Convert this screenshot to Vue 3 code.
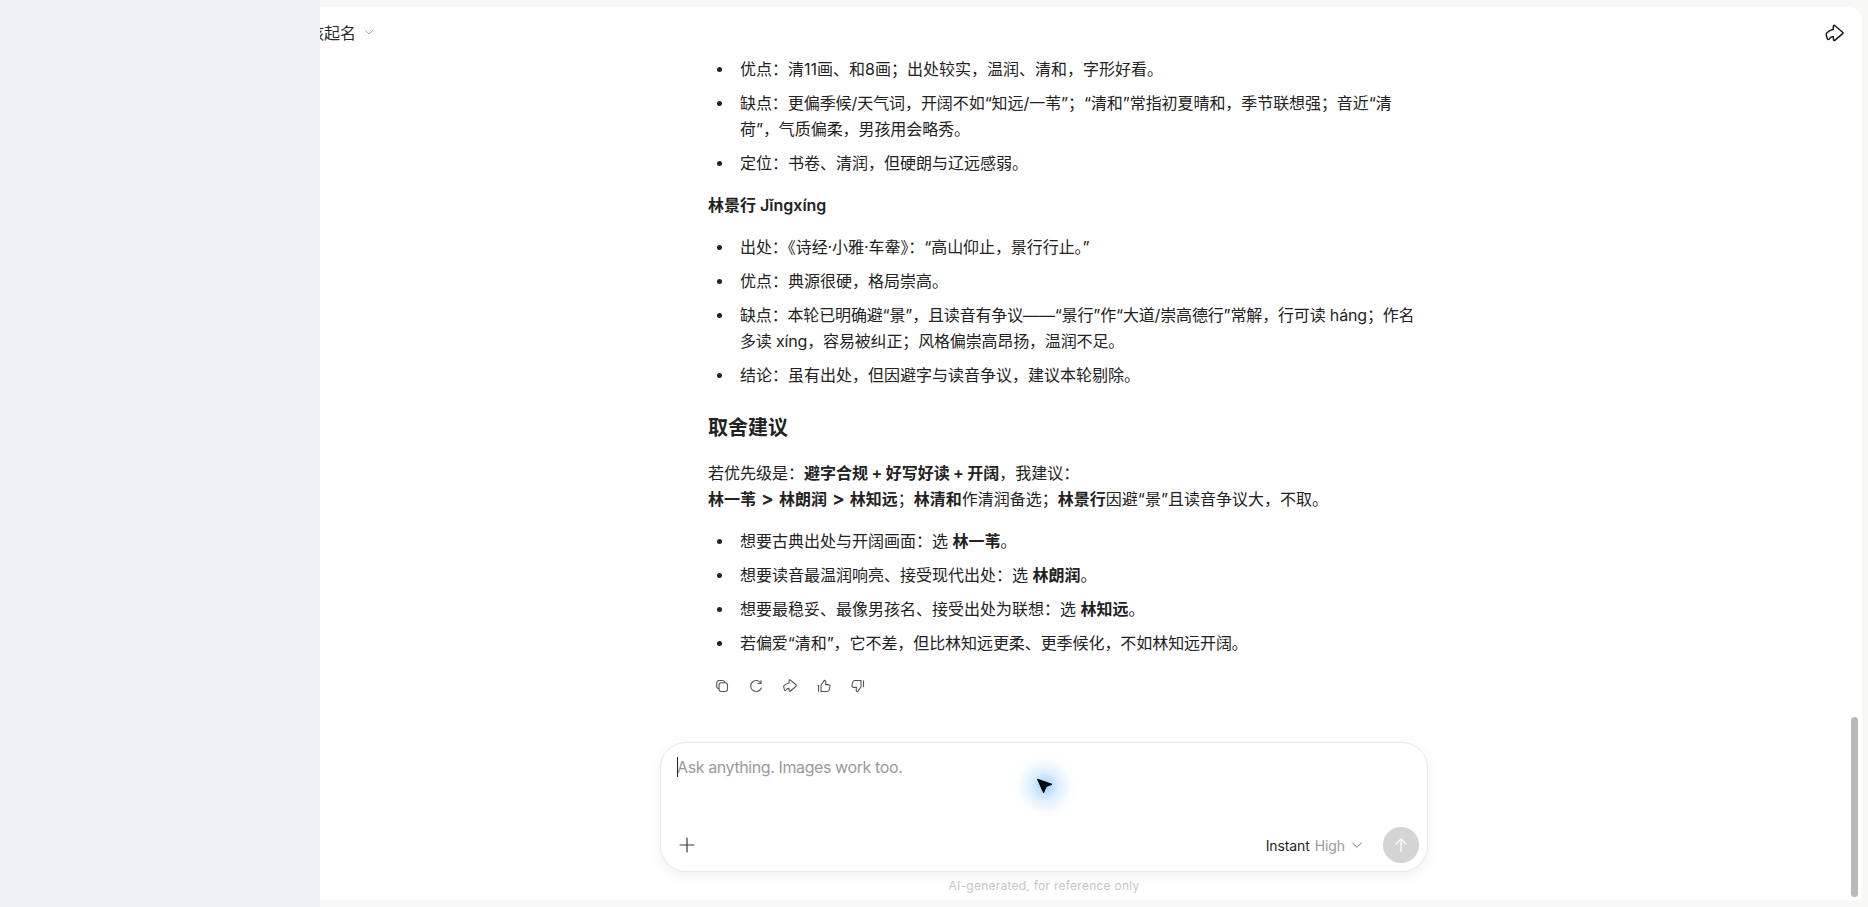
<script setup>
const zh = (s) => s.replace(/,/g, '\uFF0C').replace(/:/g, '\uFF1A').replace(/;/g, '\uFF1B')
const firstList = [
  '优点:清11画、和8画;出处较实,温润、清和,字形好看。',
  '缺点:更偏季候/天气词,开阔不如“知远/一苇”;“清和”常指初夏晴和,季节联想强;音近“清荷”,气质偏柔,男孩用会略秀。',
  '定位:书卷、清润,但硬朗与辽远感弱。',
].map(zh)
const secondList = [
  '出处:《诗经·小雅·车舝》:“高山仰止,景行行止。”',
  '优点:典源很硬,格局崇高。',
  '缺点:本轮已明确避“景”,且读音有争议——“景行”作“大道/崇高德行”常解,行可读 háng;作名多读 xíng,容易被纠正;风格偏崇高昂扬,温润不足。',
  '结论:虽有出处,但因避字与读音争议,建议本轮剔除。',
].map(zh)
const picks = [
  { text: zh('想要古典出处与开阔画面:选 '), name: '林一苇' },
  { text: zh('想要读音最温润响亮、接受现代出处:选 '), name: '林朗润' },
  { text: zh('想要最稳妥、最像男孩名、接受出处为联想:选 '), name: '林知远' },
]
const lastPick = zh('若偏爱“清和”,它不差,但比林知远更柔、更季候化,不如林知远开阔。')
const itemClass = (item) => ({ quoted: item.includes('“'), dense: item.includes('——') })
</script>

<template>
  <div class="app">
    <aside class="sidebar"></aside>
    <main class="panel">
      <header class="topbar">
        <div class="title">
          <span>男孩起名</span>
          <svg class="title-chevron" viewBox="0 0 12 12" width="12" height="12" fill="none">
            <path d="M2 4l4 4 4-4" stroke="#a8a8a8" stroke-width="1" stroke-linecap="round" stroke-linejoin="round" />
          </svg>
        </div>
        <button class="icon-btn top-share" aria-label="Share">
          <svg viewBox="0 0 32 26" width="32" height="26" fill="none">
            <path d="M16.700 5.500 24.600 12.200Q25.300 13 24.600 13.600L16.800 20.400Q15.800 21 15.600 19.800L15.200 16.600Q12.500 16.600 11.300 18.800 10.200 20.400 9.300 18.600L8.300 15.300Q7.800 14 9 12.800 11.500 10 15.200 9.500L15.400 6.200Q15.700 5 16.700 5.500Z" stroke="#1a1a1a" stroke-width="1.500" stroke-linejoin="round" />
          </svg>
        </button>
      </header>

      <div class="scroller">
        <article class="article">
          <ul class="list">
            <li v-for="item in firstList" :key="item" :class="itemClass(item)">{{ item }}</li>
          </ul>
          <p class="para"><strong>林景行 Jǐngxíng</strong></p>
          <ul class="list">
            <li v-for="item in secondList" :key="item" :class="itemClass(item)">{{ item }}</li>
          </ul>
          <h3 class="section-title">取舍建议</h3>
          <p class="para">
            若优先级是&#xFF1A;<strong class="tight">避字合规 + 好写好读 + 开阔</strong>&#xFF0C;我建议&#xFF1A;<br />
            <strong>林一苇 <span class="gt">&gt;</span> 林朗润 <span class="gt">&gt;</span> 林知远</strong>&#xFF1B;<strong>林清和</strong>作清润备选&#xFF1B;<strong>林景行</strong>因避“景”且读音争议大&#xFF0C;不取。
          </p>
          <ul class="list">
            <li v-for="pick in picks" :key="pick.name">{{ pick.text }}<strong>{{ pick.name }}</strong>。</li>
            <li :class="itemClass(lastPick)">{{ lastPick }}</li>
          </ul>
          <div class="actions">
            <button class="icon-btn" aria-label="Copy">
              <svg viewBox="0 0 16 16" width="16" height="16" fill="none" stroke="#555" stroke-width="1.100" stroke-linecap="round" stroke-linejoin="round">
                <rect x="5" y="4.800" width="8.500" height="8.700" rx="2.400" />
                <path d="M10.800 4.600C10.600 3.300 9.800 2.500 8.500 2.500H5.200C3.700 2.500 2.700 3.500 2.700 5v3.500c0 1.200.7 2 1.900 2.300" />
              </svg>
            </button>
            <button class="icon-btn" aria-label="Retry">
              <svg viewBox="0 0 16 16" width="16" height="16" fill="none" stroke="#555" stroke-width="1.100" stroke-linecap="round" stroke-linejoin="round">
                <path d="M12.900 5.200A5.500 5.500 0 1 0 13.300 10" />
                <path d="M13 2.500v3h-3" />
              </svg>
            </button>
            <button class="icon-btn" aria-label="Share">
              <svg viewBox="6 3 21 21" width="16" height="16" fill="none">
                <path d="M16.700 5.500 24.600 12.200Q25.300 13 24.600 13.600L16.800 20.400Q15.800 21 15.600 19.800L15.200 16.600Q12.500 16.600 11.300 18.800 10.200 20.400 9.300 18.600L8.300 15.300Q7.800 14 9 12.800 11.500 10 15.200 9.500L15.400 6.200Q15.700 5 16.700 5.500Z" stroke="#555" stroke-width="1.450" stroke-linejoin="round" />
              </svg>
            </button>
            <button class="icon-btn" aria-label="Like">
              <svg viewBox="0 0 16 16" width="16" height="16" fill="none" stroke="#555" stroke-width="1.100" stroke-linecap="round" stroke-linejoin="round">
                <path d="M2.500 7.200v6.100" />
                <path d="M5 13.500h6.300c1 0 1.700-.6 1.900-1.500l.8-3.500c.2-1-.5-1.900-1.600-1.900H9.500l.3-2.400c.1-1-.6-1.800-1.500-1.800L5 7.200v6.300Z" />
              </svg>
            </button>
            <button class="icon-btn" aria-label="Dislike">
              <svg viewBox="0 0 16 16" width="16" height="16" fill="none" stroke="#555" stroke-width="1.100" stroke-linecap="round" stroke-linejoin="round">
                <path d="M13.500 8.800V2.700" />
                <path d="M11 2.500H4.700c-1 0-1.700.6-1.900 1.500L2 7.500c-.2 1 .5 1.900 1.600 1.900h2.900l-.3 2.400c-.1 1 .6 1.800 1.500 1.800L11 8.800V2.500Z" />
              </svg>
            </button>
          </div>
        </article>
      </div>

      <section class="composer">
        <div class="prompt">
          <span class="caret"></span>
          <span class="placeholder">Ask anything. Images work too.</span>
        </div>
        <div class="composer-bar">
          <button class="icon-btn plus" aria-label="Add">
            <svg viewBox="0 0 16 16" width="16" height="16" fill="none">
              <path d="M8 1v14M1 8h14" stroke="#3a3a3a" stroke-width="1.200" stroke-linecap="round" />
            </svg>
          </button>
          <div class="mode">
            <span class="mode-name">Instant</span>
            <span class="mode-level">High</span>
            <svg viewBox="0 0 12 12" width="12" height="12" fill="none">
              <path d="M1.500 3.800 6 8.300l4.500-4.500" stroke="#777" stroke-width="1" stroke-linecap="round" stroke-linejoin="round" />
            </svg>
          </div>
          <button class="send" aria-label="Send">
            <svg viewBox="0 0 16 16" width="16" height="16" fill="none">
              <path d="M8 14.500V2M3 7l5-5 5 5" stroke="#fff" stroke-width="1.300" stroke-linecap="round" stroke-linejoin="round" />
            </svg>
          </button>
        </div>
      </section>
      <footer class="disclaimer">AI-generated, for reference only</footer>

      <div class="scroll-thumb"></div>
      <div class="pointer">
        <div class="glow"></div>
        <svg viewBox="0 0 18 18" width="18" height="18">
          <path d="M1.500 2.200 16 7.300l-5.800 2.300-2.600 6.200Z" fill="#0a0a0a" stroke="#0a0a0a" stroke-width="1" stroke-linejoin="round" />
        </svg>
      </div>
    </main>
  </div>
</template>

<style>
html, body { margin: 0; background: #f8f8f7; }
</style>

<style scoped>
.app {
  position: relative;
  width: 1868px;
  height: 907px;
  overflow: hidden;
  background: #f8f8f7;
  font-family: Inter, "Noto Sans CJK SC", sans-serif;
  color: #222;
  box-sizing: border-box;
  padding: 7px 6px 7px 0;
}
.sidebar {
  position: absolute;
  left: 0;
  top: 0;
  bottom: 0;
  width: 320px;
  background: #eff1f5;
  z-index: 3;
}
.panel {
  position: relative;
  height: 100%;
  display: flex;
  flex-direction: column;
  background: #fff;
  border-radius: 0 14px 2px 0;
  overflow: hidden;
}
.topbar {
  height: 49px;
  flex: none;
  display: flex;
  align-items: center;
  justify-content: space-between;
  padding: 0 12px 0 292px;
}
.title {
  display: flex;
  align-items: center;
  gap: 7px;
  font-size: 16px;
  color: #2a2a2a;
}
.title-chevron { margin-top: 1px; }
.top-share { margin-top: 3px; }
.icon-btn {
  border: 0;
  padding: 0;
  background: none;
  display: flex;
  align-items: center;
  justify-content: center;
}
.scroller {
  flex: 1;
  min-height: 0;
  overflow: hidden;
}
.article {
  width: 768px;
  box-sizing: border-box;
  margin: -8px 0 0 660px;
  padding: 0 10px 0 48px;
  font-size: 16px;
  line-height: 26px;
}
.list {
  margin: 0;
  padding: 0 0 0 32px;
  list-style: none;
}
.list li {
  position: relative;
  margin: 8px 0;
}
.list li::before {
  content: "";
  position: absolute;
  left: -23px;
  top: 11px;
  width: 5px;
  height: 5px;
  border-radius: 50%;
  background: #222;
}
.list li.quoted { letter-spacing: -0.07px; }
.list li.dense { letter-spacing: -0.16px; }
.para { margin: 16px 0; }
.para strong, .list strong { font-weight: 600; }
.tight { word-spacing: -0.6px; }
.gt { font-size: 19px; margin: 0 1px; }
.section-title {
  margin: 25px 0 17px;
  font-size: 20px;
  line-height: 30px;
  font-weight: 600;
}
.actions {
  display: flex;
  gap: 0;
  margin: 17px 0 0 -3px;
}
.actions .icon-btn {
  width: 34px;
  height: 26px;
  flex: none;
}
.composer {
  flex: none;
  width: 768px;
  height: 130px;
  margin-left: 660px;
  box-sizing: border-box;
  position: relative;
  display: flex;
  flex-direction: column;
  justify-content: space-between;
  background: #fff;
  border: 1px solid #e9e9e9;
  border-radius: 26px;
  box-shadow: 0 4px 14px rgba(0, 0, 0, 0.06);
  padding: 11px 8px 8px 16px;
}
.prompt {
  position: relative;
  height: 26px;
  line-height: 26px;
  font-size: 16px;
  letter-spacing: -0.4px;
}
.caret {
  position: absolute;
  left: 0;
  top: 3px;
  width: 1px;
  height: 20px;
  background: #222;
}
.placeholder { color: #9a9a9a; }
.composer-bar {
  display: flex;
  align-items: center;
  height: 36px;
}
.plus { width: 22px; height: 22px; margin-left: -1px; }
.mode {
  margin-left: auto;
  display: flex;
  align-items: center;
  gap: 5px;
  font-size: 14px;
  letter-spacing: -0.1px;
  margin-right: 20px;
}
.mode-name { color: #1f1f1f; }
.mode-level { color: #9a9a9a; }
.mode svg { margin-left: 1px; }
.send {
  width: 36px;
  height: 36px;
  border: 0;
  padding: 0;
  border-radius: 50%;
  background: #d4d4d4;
  display: flex;
  align-items: center;
  justify-content: center;
}
.disclaimer {
  flex: none;
  height: 28px;
  width: 768px;
  margin-left: 660px;
  text-align: center;
  line-height: 28px;
  font-size: 12px;
  letter-spacing: 0.25px;
  color: #c6c6c6;
}
.scroll-thumb {
  position: absolute;
  left: 1851px;
  top: 710px;
  width: 7px;
  height: 180px;
  border-radius: 4px;
  background: #b9b9b9;
}
.pointer {
  position: absolute;
  left: 1036px;
  top: 770px;
  width: 18px;
  height: 18px;
}
.pointer svg { position: relative; display: block; }
.glow {
  position: absolute;
  left: -29px;
  top: -29px;
  width: 76px;
  height: 76px;
  border-radius: 50%;
  background: radial-gradient(circle, rgba(100, 180, 250, 0.6) 0%, rgba(130, 195, 250, 0.26) 26%, rgba(200, 230, 252, 0.06) 50%, rgba(255, 255, 255, 0) 68%);
}
</style>
